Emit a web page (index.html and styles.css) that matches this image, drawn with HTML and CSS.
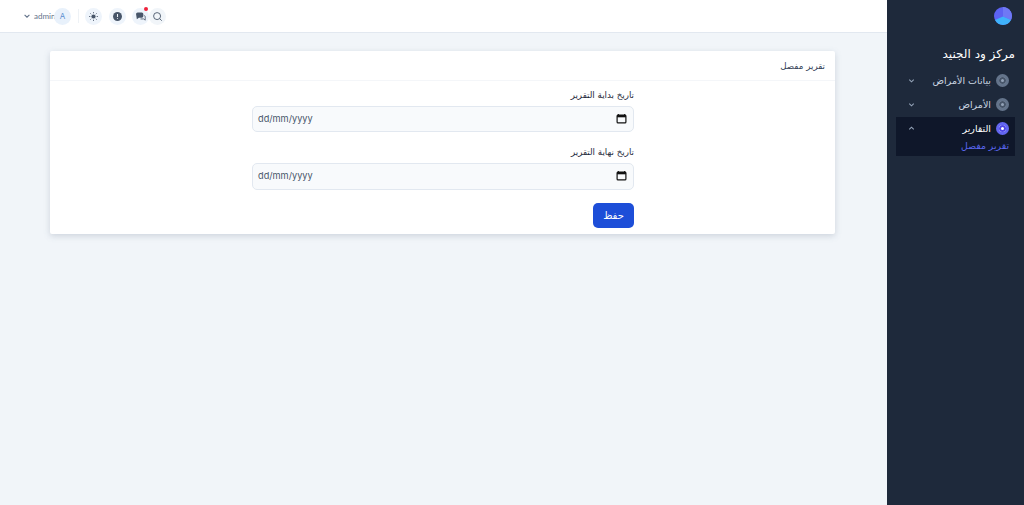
FILE: index.html
```html
<!DOCTYPE html>
<html lang="ar">
<head>
<meta charset="utf-8">
<title>تقرير مفصل</title>
<link rel="stylesheet" href="styles.css">
</head>
<body>
<div class="shell">
  <div class="main">
    <header class="topbar">
      <svg class="chev" viewBox="0 0 10 10"><path d="M2 3.500 5 6.500 8 3.500"/></svg>
      <span class="user">admin</span>
      <span class="avatar">A</span>
      <span class="sep"></span>
      <span class="tool"><svg viewBox="0 0 16 16"><circle cx="8" cy="8" r="2.600" fill="#475569"/><path d="M8 2.500v1.600M8 11.900v1.600M2.500 8h1.600M11.900 8h1.600M4.100 4.100l1.100 1.100M10.800 10.800l1.100 1.100M4.100 11.900l1.100-1.100M10.800 5.200l1.100-1.100" stroke="#475569" stroke-width="1" fill="none"/></svg></span>
      <span class="tool"><svg viewBox="0 0 16 16"><circle cx="8" cy="8" r="5.500" fill="#475569"/><path d="M8 5v3.600M8 10v1.100" stroke="#eef4fb" stroke-width="1.300"/></svg></span>
      <span class="tool chat"><svg viewBox="0 0 16 16"><path d="M2.500 5a2 2 0 0 1 2-2h5a2 2 0 0 1 2 2v2.500a2 2 0 0 1-2 2H6L3.500 11.500z" fill="#475569"/><path d="M12.500 7h.3a1 1 0 0 1 1 1v4.500l-1.800-1.500H8" stroke="#475569" fill="none"/></svg><i class="dot"></i></span>
      <span class="tool search"><svg viewBox="0 0 16 16"><circle cx="7.500" cy="7.500" r="4.300" fill="none" stroke="#475569" stroke-width="1.100"/><path d="M10.700 10.700 13.200 13.200" stroke="#475569" stroke-width="1.100"/></svg></span>
    </header>
    <main class="content">
      <section class="card">
        <h1 class="card-title" dir="rtl">تقرير مفصل</h1>
        <form class="form" dir="rtl">
          <div class="field">
            <label class="label">تاريخ بداية التقرير</label>
            <div class="date" dir="ltr"><span>dd/mm/yyyy</span><svg viewBox="0 0 12 12"><path d="M2.500 1v1.500M9.500 1v1.500" stroke="#111" stroke-width="1.200"/><rect x="1.200" y="2.200" width="9.600" height="8.600" rx="1" fill="none" stroke="#111" stroke-width="1.300"/><rect x="1.200" y="2.200" width="9.600" height="2.500" fill="#111"/></svg></div>
          </div>
          <div class="field">
            <label class="label">تاريخ نهاية التقرير</label>
            <div class="date" dir="ltr"><span>dd/mm/yyyy</span><svg viewBox="0 0 12 12"><path d="M2.500 1v1.500M9.500 1v1.500" stroke="#111" stroke-width="1.200"/><rect x="1.200" y="2.200" width="9.600" height="8.600" rx="1" fill="none" stroke="#111" stroke-width="1.300"/><rect x="1.200" y="2.200" width="9.600" height="2.500" fill="#111"/></svg></div>
          </div>
          <button class="save" type="button">حفظ</button>
        </form>
      </section>
    </main>
  </div>
  <aside class="sidebar" dir="rtl">
    <div class="logo"><svg viewBox="0 0 18 18"><circle cx="9" cy="9" r="9" fill="#5d62f2"/><path d="M9 0A9 9 0 0 1 17 13L9 9.500Z" fill="#6f78f5"/><path d="M9 9.500 1 13A9 9 0 0 0 17 13Z" fill="#3fb2fb"/></svg></div>
    <div class="brand">مركز ود الجنيد</div>
    <nav class="nav">
      <div class="item">
        <span class="bullet"></span><span class="item-text">بيانات الأمراض</span>
        <svg class="item-chev" viewBox="0 0 10 10"><path d="M2.500 4 5 6.500 7.500 4"/></svg>
      </div>
      <div class="item">
        <span class="bullet"></span><span class="item-text">الأمراض</span>
        <svg class="item-chev" viewBox="0 0 10 10"><path d="M2.500 4 5 6.500 7.500 4"/></svg>
      </div>
      <div class="group">
        <div class="item active">
          <span class="bullet on"></span><span class="item-text">التقارير</span>
          <svg class="item-chev" viewBox="0 0 10 10"><path d="M2.500 6 5 3.500 7.500 6"/></svg>
        </div>
        <div class="sub">تقرير مفصل</div>
      </div>
    </nav>
  </aside>
</div>
</body>
</html>
```
FILE: styles.css
```css
* { box-sizing: border-box; }
html, body { margin: 0; height: 100%; }
body { font-family: "DejaVu Sans", "Noto Sans", sans-serif; background: #f1f5f9; overflow: hidden; }
.shell { display: flex; height: 505px; }
.main { flex: 1; min-width: 0; display: flex; flex-direction: column; }
.topbar { height: 33px; background: #fff; border-bottom: 1px solid #e2e8f0; display: flex; align-items: center; padding-left: 23px; }
.chev { width: 8px; height: 8px; fill: none; stroke: #64748b; stroke-width: 1.400; }
.user { width: 20px; font: 8px "Lato", sans-serif; color: #64748b; margin-left: 3px; }
.avatar { width: 17px; height: 17px; border-radius: 50%; background: #e8f1fb; color: #5b8fd0; font: 8px/17px "Inter", sans-serif; text-align: center; }
.sep { width: 1px; height: 14px; background: #eef2f6; margin: 0 6px 0 7px; }
.tool { width: 17px; height: 17px; border-radius: 50%; background: #eef4fb; display: flex; align-items: center; justify-content: center; margin-left: 6.500px; position: relative; }
.sep + .tool { margin-left: 0; }
.tool svg { width: 13px; height: 13px; }
.search { margin-left: 0; background: #f1f5f9; }
.dot { position: absolute; top: -1px; right: 1px; width: 4px; height: 4px; border-radius: 50%; background: #ef233c; }
.content { flex: 1; padding: 18px 52px 0 50px; }
.card { height: 183px; background: #fff; border-radius: 2px; box-shadow: 0 2px 6px rgba(100, 116, 139, .25); }
.card-title { margin: 0; height: 30px; padding: 0 10px; border-bottom: 1px solid #f4f6f9; font-size: 8.700px; line-height: 30px; font-weight: 400; color: #334155; }
.form { width: 382px; margin-left: 202px; padding-top: 7px; display: flex; flex-direction: column; align-items: flex-start; }
.field { width: 100%; height: 57.300px; }
.label { display: block; height: 18px; font-size: 8.700px; line-height: 15px; color: #1e293b; }
.date { height: 26.400px; border: 1px solid #e2e8f0; border-radius: 5px; background: #f8fafc; display: flex; align-items: center; justify-content: space-between; padding: 0 6px 1px 5px; font: 9.200px "Inter", sans-serif; color: #475569; }
.date svg { width: 11px; height: 11px; }
.save { width: 41px; height: 25px; border: 0; border-radius: 5px; background: #1d4ed8; color: #fff; font: 10px "DejaVu Sans", sans-serif; padding: 0; }
.sidebar { width: 137px; background: #1e293b; padding: 0 9px; color: #e2e8f0; }
.logo { height: 31px; padding-top: 7px; padding-right: 3px; display: flex; }
.logo svg { width: 18px; height: 18px; }
.brand { margin-top: 14px; height: 18px; font-size: 12px; line-height: 18px; color: #fff; }
.nav { margin-top: 5px; display: flex; flex-direction: column; }
.item { height: 24px; display: flex; align-items: center; gap: 5px; padding: 0 6px 0 11px; font-size: 9.500px; color: #cbd5e1; }
.item-text { flex: 1; }
.bullet { width: 13px; height: 13px; border-radius: 50%; background: #94a3b8; border: 3px solid #64748b; box-shadow: inset 0 0 0 2px #475569; }
.bullet.on { background: #fff; border-color: #6366f1; box-shadow: inset 0 0 0 2px #4f46e5; }
.item-chev { width: 9px; height: 9px; fill: none; stroke: #94a3b8; stroke-width: 1.200; }
.group { background: #0f172a; height: 39px; margin-top: 1px; }
.active { color: #fff; height: 22px; }
.sub { padding-right: 6px; font-size: 9.300px; line-height: 13px; color: #5b67f0; }
```
